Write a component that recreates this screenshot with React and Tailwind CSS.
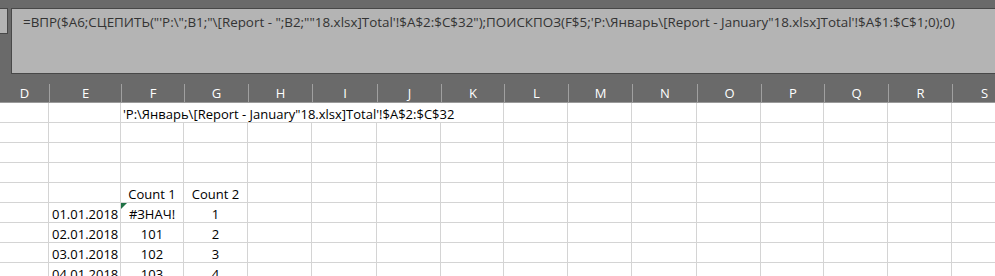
import React from "react";

const cols = [
  { name: "D", w: 49 },
  { name: "E", w: 72 },
  { name: "F", w: 63 },
  { name: "G", w: 64 },
  { name: "H", w: 64 },
  { name: "I", w: 65 },
  { name: "J", w: 64 },
  { name: "K", w: 63 },
  { name: "L", w: 64 },
  { name: "M", w: 64 },
  { name: "N", w: 65 },
  { name: "O", w: 64 },
  { name: "P", w: 63 },
  { name: "Q", w: 64 },
  { name: "R", w: 64 },
  { name: "S", w: 64 },
];

const formula =
  "=ВПР($A6;СЦЕПИТЬ(\"'P:\\\";B1;\"\\[Report - \";B2;\"\"18.xlsx]Total'!$A$2:$C$32\");ПОИСКПОЗ(F$5;'P:\\Январь\\[Report - January\"18.xlsx]Total'!$A$1:$C$1;0);0)";

const rows = [
  {},
  {},
  {},
  {},
  { F: "Count 1", G: "Count 2" },
  { E: "01.01.2018", F: "#ЗНАЧ!", G: "1", flag: true },
  { E: "02.01.2018", F: "101", G: "2" },
  { E: "03.01.2018", F: "102", G: "3" },
  { E: "04.01.2018", F: "103", G: "4" },
];

const Cell = ({ col, children, align = "center", flag }) => (
  <div
    className="relative shrink-0 h-[20px] border-r border-b border-[#d4d4d4] pt-[3px] leading-[17px] px-[3px] whitespace-nowrap"
    style={{ width: col.w, textAlign: align }}
  >
    {flag && (
      <svg className="absolute left-0 top-0" width="6" height="6">
        <polygon points="0,0 6,0 0,6" fill="#1e7145" />
      </svg>
    )}
    {children}
  </div>
);

export default function App() {
  return (
    <div
      className="w-[995px] h-[276px] overflow-hidden bg-white"
      style={{ fontFamily: "'Open Sans', 'Noto Sans', sans-serif" }}
    >
      {/* formula bar */}
      <div className="h-[84px] bg-[#6a6a6a] pt-[8px] flex items-start">
        <div className="w-[8px] h-[26px] bg-[#b4b4b4] border border-l-0 border-[#484848]" />
        <div className="ml-[3px] flex-1 h-[66px] bg-[#b4b4b4] border border-r-0 border-[#484848] pl-[11px] pt-[4px] text-[13.4px] leading-[18px] text-[#333] whitespace-nowrap overflow-hidden">
          {formula}
        </div>
      </div>

      {/* column headers */}
      <div className="flex h-[19px] bg-[#6a6a6a] border-b border-[#9a9a9a] whitespace-nowrap">
        {cols.map((c, i) => (
          <div
            key={c.name}
            className={`shrink-0 h-full text-center text-white text-[13px] leading-[18px] ${
              i === 0 ? "" : "border-l border-[#a0a0a0]"
            }`}
            style={{ width: c.w }}
          >
            {c.name}
          </div>
        ))}
      </div>

      {/* grid */}
      <div className="text-[13px] text-black">
        <div className="flex">
          <Cell col={cols[0]} />
          <Cell col={cols[1]} />
          <div className="shrink-0 h-[20px] w-[383px] border-r border-b border-[#d4d4d4] pt-[3px] leading-[17px] px-[2px] whitespace-nowrap">
            'P:\Январь\[Report - January"18.xlsx]Total'!$A$2:$C$32
          </div>
          {cols.slice(8).map((c) => (
            <Cell key={c.name} col={c} />
          ))}
        </div>
        {rows.slice(1).map((r, ri) => (
          <div key={ri} className="flex">
            {cols.map((c) => (
              <Cell
                key={c.name}
                col={c}
                align={c.name === "E" ? "right" : "center"}
                flag={c.name === "F" && r.flag}
              >
                {r[c.name]}
              </Cell>
            ))}
          </div>
        ))}
      </div>
    </div>
  );
}
